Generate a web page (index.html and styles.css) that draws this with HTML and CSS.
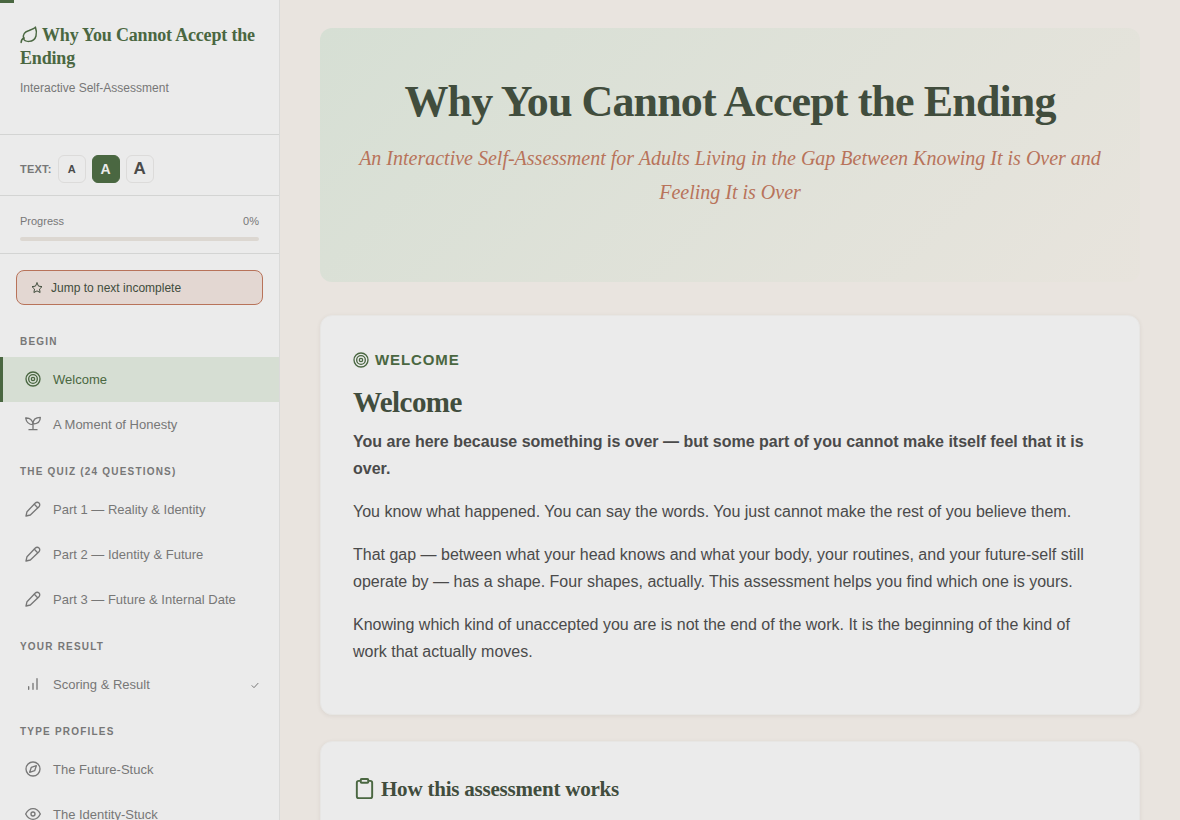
FILE: index.html
```html
<!DOCTYPE html>
<html lang="en">
<head>
    <meta charset="UTF-8">
    <meta name="viewport" content="width=device-width, initial-scale=1.0">
    <title>Why You Cannot Accept the Ending</title>
    <link rel="stylesheet" href="styles.css">
</head>
<body>
    <!-- Shared icons -->
    <svg class="icon-defs" aria-hidden="true">
        <symbol id="i-target" viewBox="0 0 24 24"><circle cx="12" cy="12" r="10.5"/><circle cx="12" cy="12" r="6.5"/><circle cx="12" cy="12" r="2.5"/></symbol>
        <symbol id="i-pencil" viewBox="0 0 24 24"><path d="M15.500 3a3.800 3.800 0 0 1 5.500 5.500L8 21 1.500 22.500 3 16 15.500 3z"/><path d="M14 5l5 5"/></symbol>
    </svg>

    <div class="scroll-progress"></div>

    <aside class="sidebar">
        <header class="sidebar-header">
            <h2 class="sidebar-title">
                <svg class="icon leaf" viewBox="0 0 24 24"><path d="M1.500 22c0-3 1.500-5 4-6"/><path d="M5 17C3 11 6 8 12 6c4-1.500 7-2.500 8.500-4.500C23 8 23 20 12 20.500c-3.500 0-6.500-.5-7-3.500z"/></svg>
                Why You Cannot Accept the Ending
            </h2>
            <p class="sidebar-subtitle">Interactive Self-Assessment</p>
        </header>

        <div class="text-size">
            <span class="text-size-label">Text:</span>
            <button type="button" class="size-btn small">A</button>
            <button type="button" class="size-btn active">A</button>
            <button type="button" class="size-btn large">A</button>
        </div>

        <div class="progress">
            <div class="progress-info"><span>Progress</span><span>0%</span></div>
            <div class="progress-bar"></div>
        </div>

        <button type="button" class="jump-btn">
            <svg class="icon" viewBox="0 0 24 24"><path d="M12 2l3.090 6.260L22 9.270l-5 4.870 1.180 6.880L12 17.770l-6.180 3.250L7 14.140 2 9.270l6.910-1.010L12 2z"/></svg>
            Jump to next incomplete
        </button>

        <nav>
            <h3 class="nav-label">Begin</h3>
            <a href="#welcome" class="nav-item active"><svg class="icon"><use href="#i-target"/></svg>Welcome</a>
            <a href="#honesty" class="nav-item">
                <svg class="icon" viewBox="0 0 24 24"><path d="M12 20.500V12M6 20.500h12M12 13C12 6 7 2.500 1 3c1 6 5 10 11 10zM12 12c0-6 4-10 11-10 0 6-4 10-11 10z"/></svg>A Moment of Honesty
            </a>

            <h3 class="nav-label">The Quiz (24 Questions)</h3>
            <a href="#part1" class="nav-item"><svg class="icon"><use href="#i-pencil"/></svg>Part 1 — Reality &amp; Identity</a>
            <a href="#part2" class="nav-item"><svg class="icon"><use href="#i-pencil"/></svg>Part 2 — Identity &amp; Future</a>
            <a href="#part3" class="nav-item"><svg class="icon"><use href="#i-pencil"/></svg>Part 3 — Future &amp; Internal Date</a>

            <h3 class="nav-label">Your Result</h3>
            <a href="#result" class="nav-item">
                <svg class="icon" viewBox="0 0 24 24"><path d="M5.500 20v-4M12 20v-9M18 20V4"/></svg>Scoring &amp; Result
                <svg class="icon check" viewBox="0 0 24 24"><path d="M3 14l6 6L21 7"/></svg>
            </a>

            <h3 class="nav-label">Type Profiles</h3>
            <a href="#future-stuck" class="nav-item">
                <svg class="icon" viewBox="0 0 24 24"><circle cx="12" cy="12" r="10.500"/><path d="M17 7l-2.500 7.500L7 17l2.500-7.500L17 7z"/></svg>The Future-Stuck
            </a>
            <a href="#identity-stuck" class="nav-item">
                <svg class="icon" viewBox="0 0 24 24"><path d="M1 12s4-8 11-8 11 8 11 8-4 8-11 8-11-8-11-8z"/><circle cx="12" cy="12" r="3"/></svg>The Identity-Stuck
            </a>
        </nav>
    </aside>

    <main class="content">
        <section class="hero">
            <h1>Why You Cannot Accept the Ending</h1>
            <p>An Interactive Self-Assessment for Adults Living in the Gap Between Knowing It is Over and Feeling It is Over</p>
        </section>

        <section class="card" id="welcome">
            <div class="eyebrow"><svg class="icon"><use href="#i-target"/></svg>Welcome</div>
            <h2>Welcome</h2>
            <p><strong>You are here because something is over — but some part of you cannot make itself feel that it is over.</strong></p>
            <p>You know what happened. You can say the words. You just cannot make the rest of you believe them.</p>
            <p>That gap — between what your head knows and what your body, your routines, and your future-self still operate by — has a shape. Four shapes, actually. This assessment helps you find which one is yours.</p>
            <p>Knowing which kind of unaccepted you are is not the end of the work. It is the beginning of the kind of work that actually moves.</p>
        </section>

        <section class="card">
            <h3>
                <svg class="icon" viewBox="0 0 24 24"><path d="M16 4h2a2 2 0 0 1 2 2v14a2 2 0 0 1-2 2H6a2 2 0 0 1-2-2V6a2 2 0 0 1 2-2h2"/><rect x="8" y="2" width="8" height="4" rx="1"/></svg>
                How this assessment works
            </h3>
        </section>
    </main>
</body>
</html>
```
FILE: styles.css
```css
:root {
    --green: #4a6741;
    --dark-green: #414d3d;
    --rust: #b8735a;
    --gray: #777;
    --text: #4a4a4a;
    --paper: #ebebeb;
    --line: #d3d4d3;
    --sans: "Liberation Sans", Arial, sans-serif;
    --serif: "Liberation Serif", "Times New Roman", serif;
}

* {
    box-sizing: border-box;
    margin: 0;
    padding: 0;
}

body {
    display: flex;
    align-items: flex-start;
    background: #e9e4df;
    color: var(--text);
    font-family: var(--sans);
    font-size: 16px;
    line-height: 27px;
}

.icon-defs {
    position: absolute;
    width: 0;
    height: 0;
}

.icon {
    width: 16px;
    height: 16px;
    flex-shrink: 0;
    fill: none;
    stroke: currentColor;
    stroke-width: 2;
    stroke-linecap: round;
    stroke-linejoin: round;
}

.scroll-progress {
    position: fixed;
    top: 0;
    left: 0;
    z-index: 10;
    width: 14px;
    height: 3px;
    background: var(--green);
}

/* Sidebar */
.sidebar {
    position: sticky;
    top: 0;
    width: 280px;
    height: 100vh;
    flex-shrink: 0;
    overflow-y: auto;
    scrollbar-width: none;
    background: var(--paper);
    border-right: 1px solid #dadad9;
}

.sidebar-header {
    padding: 24px 20px 36px;
    border-bottom: 1px solid var(--line);
}

.sidebar-title {
    color: var(--green);
    font-family: var(--serif);
    font-size: 18px;
    line-height: 23px;
    letter-spacing: -0.01em;
}

.leaf {
    width: 18px;
    height: 18px;
    vertical-align: -3px;
}

.sidebar-subtitle {
    margin-top: 8px;
    color: var(--gray);
    font-size: 12px;
    line-height: 20px;
}

.text-size {
    display: flex;
    align-items: center;
    gap: 6px;
    padding: 20px 20px 12px;
    border-bottom: 1px solid var(--line);
}

.text-size-label {
    color: var(--gray);
    font-size: 11px;
    font-weight: bold;
    line-height: 20px;
    letter-spacing: 0.02em;
    text-transform: uppercase;
}

.size-btn {
    width: 28px;
    height: 28px;
    border: 1px solid #dcdbda;
    border-radius: 6px;
    background: var(--paper);
    color: var(--text);
    font-family: var(--sans);
    font-size: 14px;
    font-weight: bold;
    cursor: pointer;
}

.size-btn.small {
    font-size: 11px;
}

.size-btn.large {
    font-size: 17px;
}

.size-btn.active {
    border-color: var(--green);
    background: var(--green);
    color: var(--paper);
}

.progress {
    padding: 16px 20px 12px;
    border-bottom: 1px solid var(--line);
}

.progress-info {
    display: flex;
    justify-content: space-between;
    margin-bottom: 6px;
    color: var(--gray);
    font-size: 11px;
    line-height: 19px;
}

.progress-bar {
    height: 4px;
    border-radius: 2px;
    background: #dcd7d1;
}

.jump-btn {
    display: flex;
    align-items: center;
    gap: 8px;
    width: calc(100% - 32px);
    height: 35px;
    margin: 16px 16px 12px;
    padding: 0 14px;
    border: 1px solid var(--rust);
    border-radius: 8px;
    background: #e3d7d2;
    color: var(--dark-green);
    font-family: var(--sans);
    font-size: 12px;
    cursor: pointer;
}

.jump-btn .icon {
    width: 12px;
    height: 12px;
}

.nav-label {
    padding: 16px 20px 6px;
    color: var(--gray);
    font-size: 10px;
    line-height: 18px;
    letter-spacing: 0.12em;
    text-transform: uppercase;
}

.nav-item {
    display: flex;
    align-items: center;
    gap: 12px;
    height: 45px;
    padding: 0 20px 0 22px;
    border-left: 3px solid transparent;
    color: var(--gray);
    font-size: 13px;
    text-decoration: none;
}

.nav-item .icon {
    margin-bottom: 1px;
}

.nav-item.active {
    border-left-color: var(--green);
    background: #d6ded3;
    color: var(--green);
}

.nav-item .check {
    width: 8px;
    height: 8px;
    margin-bottom: 0;
    margin-left: auto;
    stroke-width: 3;
}

/* Main content */
.content {
    flex: 1;
    min-width: 0;
    padding: 28px 40px;
}

.hero {
    margin-bottom: 33px;
    padding: 47px 32px 73px;
    border-radius: 12px;
    background: linear-gradient(135deg, #d6dfd4, #e8e4dd);
    text-align: center;
}

.hero h1 {
    margin-bottom: 12px;
    color: var(--dark-green);
    font-family: var(--serif);
    font-size: 44px;
    line-height: 54px;
    letter-spacing: -0.02em;
}

.hero p {
    color: var(--rust);
    font-family: var(--serif);
    font-size: 20px;
    font-style: italic;
    line-height: 34px;
}

.card {
    margin-bottom: 26px;
    padding: 32px 32px 33px;
    border: 1px solid #e7e6e4;
    border-radius: 12px;
    background: var(--paper);
    box-shadow: 0 1px 4px rgba(70, 50, 40, 0.08);
}

.eyebrow {
    display: flex;
    align-items: center;
    gap: 6px;
    margin-bottom: 13px;
    color: var(--green);
    font-size: 15px;
    font-weight: bold;
    line-height: 23px;
    letter-spacing: 0.06em;
    text-transform: uppercase;
}

.card h2 {
    margin-bottom: 8px;
    color: var(--dark-green);
    font-family: var(--serif);
    font-size: 29px;
    line-height: 36px;
    letter-spacing: -0.02em;
}

.card p {
    margin-bottom: 16px;
}

.card h3 {
    display: flex;
    align-items: center;
    gap: 5px;
    color: var(--dark-green);
    font-family: var(--serif);
    font-size: 21px;
    line-height: 30px;
    letter-spacing: -0.01em;
}

.card h3 .icon {
    width: 23px;
    height: 23px;
    margin-bottom: 2px;
    color: var(--green);
}
```
